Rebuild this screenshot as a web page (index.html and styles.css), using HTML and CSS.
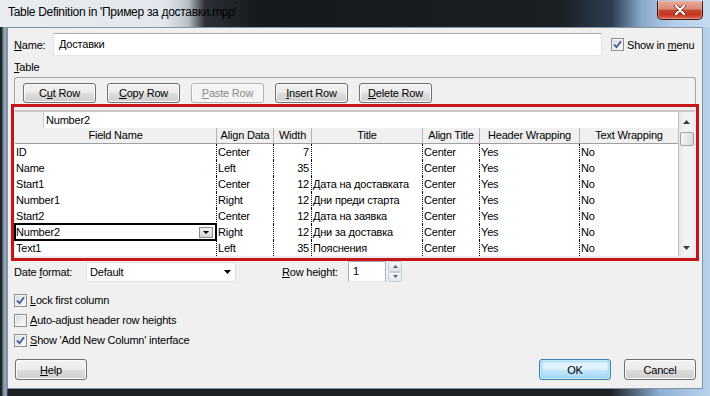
FILE: index.html
```html
<!DOCTYPE html>
<html lang="en">
<head>
    <meta charset="UTF-8">
    <title>Table Definition</title>
    <link rel="stylesheet" href="styles.css">
</head>
<body>
    <div class="window">
        <div class="titlebar">
            <span class="title">Table Definition in 'Пример за доставки.mpp'</span>
            <div class="close">
                <svg width="12" height="10" viewBox="0 0 12 10">
                    <path d="M2 1 L10 9 M10 1 L2 9" stroke="#6b2a22" stroke-width="3.6" stroke-linecap="round"/>
                    <path d="M2 1 L10 9 M10 1 L2 9" stroke="#fff" stroke-width="2.2" stroke-linecap="round"/>
                </svg>
            </div>
        </div>

        <div class="client">
            <div class="name-row">
                <span class="name-label"><u>N</u>ame:</span>
                <div class="textbox">Доставки</div>
                <div class="check menu-check">
                    <span class="cb"><svg width="9" height="9" viewBox="0 0 9 9"><path d="M1 4.5 L3.5 7.2 L8 1.2" fill="none" stroke="#3d5591" stroke-width="1.8"/></svg></span>
                    <span>Show in <u>m</u>enu</span>
                </div>
            </div>

            <div class="section-label"><u>T</u>able</div>

            <div class="group">
                <div class="toolbar">
                    <button class="btn">C<u>u</u>t Row</button>
                    <button class="btn"><u>C</u>opy Row</button>
                    <button class="btn disabled"><u>P</u>aste Row</button>
                    <button class="btn"><u>I</u>nsert Row</button>
                    <button class="btn"><u>D</u>elete Row</button>
                </div>
            </div>

            <div class="grid">
                <div class="grid-inner">
                    <div class="grid-main">
                        <div class="entry">
                            <div class="entry-stub"></div>
                            <div class="entry-field">Number2</div>
                        </div>
                        <div class="head">
                            <span>Field Name</span>
                            <span>Align Data</span>
                            <span>Width</span>
                            <span>Title</span>
                            <span>Align Title</span>
                            <span>Header Wrapping</span>
                            <span>Text Wrapping</span>
                        </div>
                        <div class="row">
                            <span>ID</span><span>Center</span><span class="num">7</span><span></span><span>Center</span><span>Yes</span><span>No</span>
                        </div>
                        <div class="row">
                            <span>Name</span><span>Left</span><span class="num">35</span><span></span><span>Center</span><span>Yes</span><span>No</span>
                        </div>
                        <div class="row">
                            <span>Start1</span><span>Center</span><span class="num">12</span><span>Дата на доставката</span><span>Center</span><span>Yes</span><span>No</span>
                        </div>
                        <div class="row">
                            <span>Number1</span><span>Right</span><span class="num">12</span><span>Дни преди старта</span><span>Center</span><span>Yes</span><span>No</span>
                        </div>
                        <div class="row">
                            <span>Start2</span><span>Center</span><span class="num">12</span><span>Дата на заявка</span><span>Center</span><span>Yes</span><span>No</span>
                        </div>
                        <div class="row">
                            <span class="sel">Number2
                                <i class="dd"><svg width="6" height="3" viewBox="0 0 6 3"><path d="M0 0 H6 L3 3 Z" fill="#000"/></svg></i>
                            </span><span>Right</span><span class="num">12</span><span>Дни за доставка</span><span>Center</span><span>Yes</span><span>No</span>
                        </div>
                        <div class="row">
                            <span>Text1</span><span>Left</span><span class="num">35</span><span>Пояснения</span><span>Center</span><span>Yes</span><span>No</span>
                        </div>
                    </div>
                    <div class="vscroll">
                        <div class="arrow up"><svg width="7" height="4" viewBox="0 0 7 4"><path d="M0 4 H7 L3.5 0 Z" fill="#3b3b3b"/></svg></div>
                        <div class="thumb"></div>
                        <div class="track"></div>
                        <div class="arrow down"><svg width="7" height="4" viewBox="0 0 7 4"><path d="M0 0 H7 L3.5 4 Z" fill="#3b3b3b"/></svg></div>
                    </div>
                </div>
            </div>

            <div class="date-row">
                <span class="date-label">Date <u>f</u>ormat:</span>
                <div class="combo">
                    <span>Default</span>
                    <svg width="7" height="4" viewBox="0 0 7 4"><path d="M0 0 H7 L3.5 4 Z" fill="#000"/></svg>
                </div>
                <span class="height-label"><u>R</u>ow height:</span>
                <div class="spin-box">1</div>
                <div class="spin">
                    <div class="spin-btn"><svg width="5" height="3" viewBox="0 0 5 3"><path d="M0 3 H5 L2.5 0 Z" fill="#4d6185"/></svg></div>
                    <div class="spin-btn"><svg width="5" height="3" viewBox="0 0 5 3"><path d="M0 0 H5 L2.5 3 Z" fill="#4d6185"/></svg></div>
                </div>
            </div>

            <div class="checks">
                <div class="check">
                    <span class="cb"><svg width="9" height="9" viewBox="0 0 9 9"><path d="M1 4.5 L3.5 7.2 L8 1.2" fill="none" stroke="#3d5591" stroke-width="1.8"/></svg></span>
                    <span><u>L</u>ock first column</span>
                </div>
                <div class="check">
                    <span class="cb"></span>
                    <span><u>A</u>uto-adjust header row heights</span>
                </div>
                <div class="check">
                    <span class="cb"><svg width="9" height="9" viewBox="0 0 9 9"><path d="M1 4.5 L3.5 7.2 L8 1.2" fill="none" stroke="#3d5591" stroke-width="1.8"/></svg></span>
                    <span><u>S</u>how 'Add New Column' interface</span>
                </div>
            </div>

            <div class="footer">
                <button class="btn wide"><u>H</u>elp</button>
                <div class="spacer"></div>
                <button class="btn wide default">OK</button>
                <button class="btn wide">Cancel</button>
            </div>
        </div>
    </div>
</body>
</html>
```

FILE: styles.css
```css
body {
    margin: 0;
    background: #fff;
    font-family: "Liberation Sans", Arial, sans-serif;
    font-size: 11px;
    letter-spacing: -0.2px;
    color: #000;
}

u {
    text-decoration: underline;
    text-underline-offset: 1px;
}

.window {
    width: 710px;
    height: 396px;
    box-sizing: border-box;
    padding: 0 7px 7px;
    display: flex;
    flex-direction: column;
    background: linear-gradient(90deg, #16191d 0, #2a2f36 2px, #75879a 3px, #9fb0c2 6px, #1d2126 8px, #1d2126 86%, #8db0d4 93%, #bad3ec 100%);
}

.titlebar {
    height: 27px;
    margin: 0 -7px;
    display: flex;
    justify-content: space-between;
    align-items: flex-start;
    background: linear-gradient(90deg, #e9edf1 0, #e2e7ed 165px, #b9c0c8 188px, #2c3036 205px, #15181c 260px, #1b1f24 560px, #2d3e52 612px, #8aaaca 642px, #b5cfe9 675px, #c5dbf0 710px);
}

.title {
    padding-left: 8px;
    line-height: 25px;
    font-size: 12px;
    letter-spacing: -0.3px;
    color: #000;
}

.close {
    width: 46px;
    height: 19px;
    margin: 1px 7px 0 0;
    box-sizing: border-box;
    border: 1px solid #3b1510;
    border-top: none;
    border-radius: 0 0 5px 5px;
    background: linear-gradient(#e9a895 0, #d98b78 45%, #c64a33 50%, #c5351f 75%, #d56a52 100%);
    box-shadow: inset 0 0 0 1px rgba(255, 200, 180, 0.45);
    display: flex;
    align-items: center;
    justify-content: center;
}

.client {
    flex: 1;
    border: 1px solid #8394a7;
    background: #f0f0f0;
    padding: 0 6px;
}

/* name row */
.name-row {
    margin-top: 5px;
    height: 23px;
    display: flex;
    align-items: center;
}

.name-label {
    width: 39px;
}

.textbox {
    width: 549px;
    height: 23px;
    box-sizing: border-box;
    padding-left: 5px;
    line-height: 21px;
    background: #fff;
    border: 1px solid #e2e3ea;
    border-top-color: #abadb3;
}

.menu-check {
    margin-left: 9px;
    white-space: nowrap;
}

.check {
    display: flex;
    align-items: center;
    gap: 3px;
}

.cb {
    width: 13px;
    height: 13px;
    flex: none;
    box-sizing: border-box;
    border: 1px solid #8e8f8f;
    background: linear-gradient(135deg, #d3d7dc 0, #eef0f2 60%, #fafafa 100%);
    box-shadow: inset 0 0 0 1px #f4f4f4;
    display: flex;
    align-items: center;
    justify-content: center;
}

.section-label {
    margin-top: 5px;
    line-height: 13px;
}

/* group box with buttons */
.group {
    margin-top: 3px;
    border: 1px solid #a4a4a4;
    border-bottom: none;
    border-radius: 3px 3px 0 0;
    padding: 5px 0 4px 8px;
}

.toolbar {
    display: flex;
    gap: 11px;
}

.btn {
    width: 73px;
    height: 20px;
    padding: 0;
    font-family: inherit;
    font-size: 11px;
    letter-spacing: -0.2px;
    color: #000;
    border: 1px solid #707070;
    border-radius: 3px;
    background: linear-gradient(#f2f2f2 0, #ebebeb 50%, #dddddd 51%, #cfcfcf 100%);
    box-shadow: inset 0 0 0 1px #fbfbfb;
}

.btn.disabled {
    color: #8b8b8b;
    border-color: #adb2b5;
    background: #f4f4f4;
}

.btn.wide {
    width: 72px;
    height: 21px;
}

.btn.default {
    border-color: #3c7fb1;
    background: linear-gradient(#ebf7fe 0, #dcf1fd 50%, #c0e6fb 51%, #a9daf6 100%);
    box-shadow: inset 0 0 0 1px #c9ecfd, inset 0 0 2px 2px #95d6f7;
}

/* grid */
.grid {
    height: 151px;
    box-sizing: border-box;
    padding: 3px 1px 2px 1px;
    background: #ececec;
    outline: 3px solid #c4141c;
}

.grid-inner {
    height: 100%;
    box-sizing: border-box;
    border-top: 2px solid #c9c9c9;
    display: flex;
}

.grid-main {
    width: 663px;
    background: #fff;
}

.entry {
    height: 16px;
    display: flex;
}

.entry-stub {
    width: 28px;
    background: #f0f0f0;
}

.entry-field {
    flex: 1;
    border-left: 1px solid #c8c8c8;
    padding-left: 2px;
    line-height: 16px;
    background: #fff;
}

.head,
.row {
    display: grid;
    grid-template-columns: 201px 57px 38px 111px 57px 100px 99px;
}

.head {
    height: 16px;
    box-sizing: border-box;
    border-bottom: 1px solid #a0a0a0;
    background: #f0f0f0;
    line-height: 15px;
    text-align: center;
}

.head span + span {
    border-left: 1px solid #b4b4b4;
}

.row {
    height: 16px;
    line-height: 16px;
}

.row span {
    padding-left: 1px;
    white-space: nowrap;
    overflow: hidden;
}

.row span + span {
    border-left: 1px dotted #000;
}

.row .num {
    text-align: right;
    padding: 0 2px 0 0;
}

.row .sel {
    position: relative;
    z-index: 1;
    overflow: visible;
    display: flex;
    align-items: center;
    outline: 2px solid #000;
    outline-offset: -1px;
}

.dd {
    margin-left: auto;
    margin-right: 3px;
    width: 14px;
    height: 11px;
    box-sizing: border-box;
    border: 1px solid #8c8c8c;
    background: linear-gradient(#f2f2f2, #d4d4d4);
    display: flex;
    align-items: center;
    justify-content: center;
}

.vscroll {
    width: 16px;
    box-sizing: border-box;
    border-left: 1px solid #bdbdbd;
    background: linear-gradient(90deg, #e6e6e6, #f4f4f4 40%, #f0f0f0);
    display: flex;
    flex-direction: column;
    align-items: center;
}

.arrow {
    width: 100%;
    display: flex;
    align-items: center;
    justify-content: center;
}

.arrow.up {
    height: 19px;
}

.arrow.down {
    height: 17px;
}

.thumb {
    width: 14px;
    height: 14px;
    margin-top: 1px;
    box-sizing: border-box;
    border: 1px solid #a1a1a1;
    border-radius: 2px;
    background: linear-gradient(90deg, #f5f5f5, #e8e8e8 50%, #d9d9d9);
}

.track {
    flex: 1;
}

/* date format / row height */
.date-row {
    margin-top: 3px;
    height: 21px;
    display: flex;
    align-items: center;
}

.date-label {
    width: 72px;
}

.combo {
    width: 150px;
    height: 20px;
    box-sizing: border-box;
    padding: 0 4px 0 3px;
    background: #fff;
    border: 1px solid #dedede;
    display: flex;
    align-items: center;
    justify-content: space-between;
}

.height-label {
    margin-left: 46px;
    width: 66px;
}

.spin-box {
    width: 38px;
    height: 21px;
    box-sizing: border-box;
    padding-left: 4px;
    line-height: 19px;
    background: #fff;
    border: 1px solid #abadb3;
    border-bottom-color: #e3e9ef;
}

.spin {
    margin-left: 2px;
    width: 14px;
    height: 21px;
    display: flex;
    flex-direction: column;
}

.spin-btn {
    flex: 1;
    box-sizing: border-box;
    border: 1px solid #c5cdd6;
    border-radius: 2px;
    background: linear-gradient(#f6f8fa, #e1e6eb);
    display: flex;
    align-items: center;
    justify-content: center;
}

/* check boxes */
.checks {
    margin-top: 8px;
}

.checks .check {
    height: 20px;
}

/* buttons */
.footer {
    margin-top: 9px;
    padding-left: 1px;
    display: flex;
    gap: 13px;
}

.spacer {
    flex: 1;
}
```
